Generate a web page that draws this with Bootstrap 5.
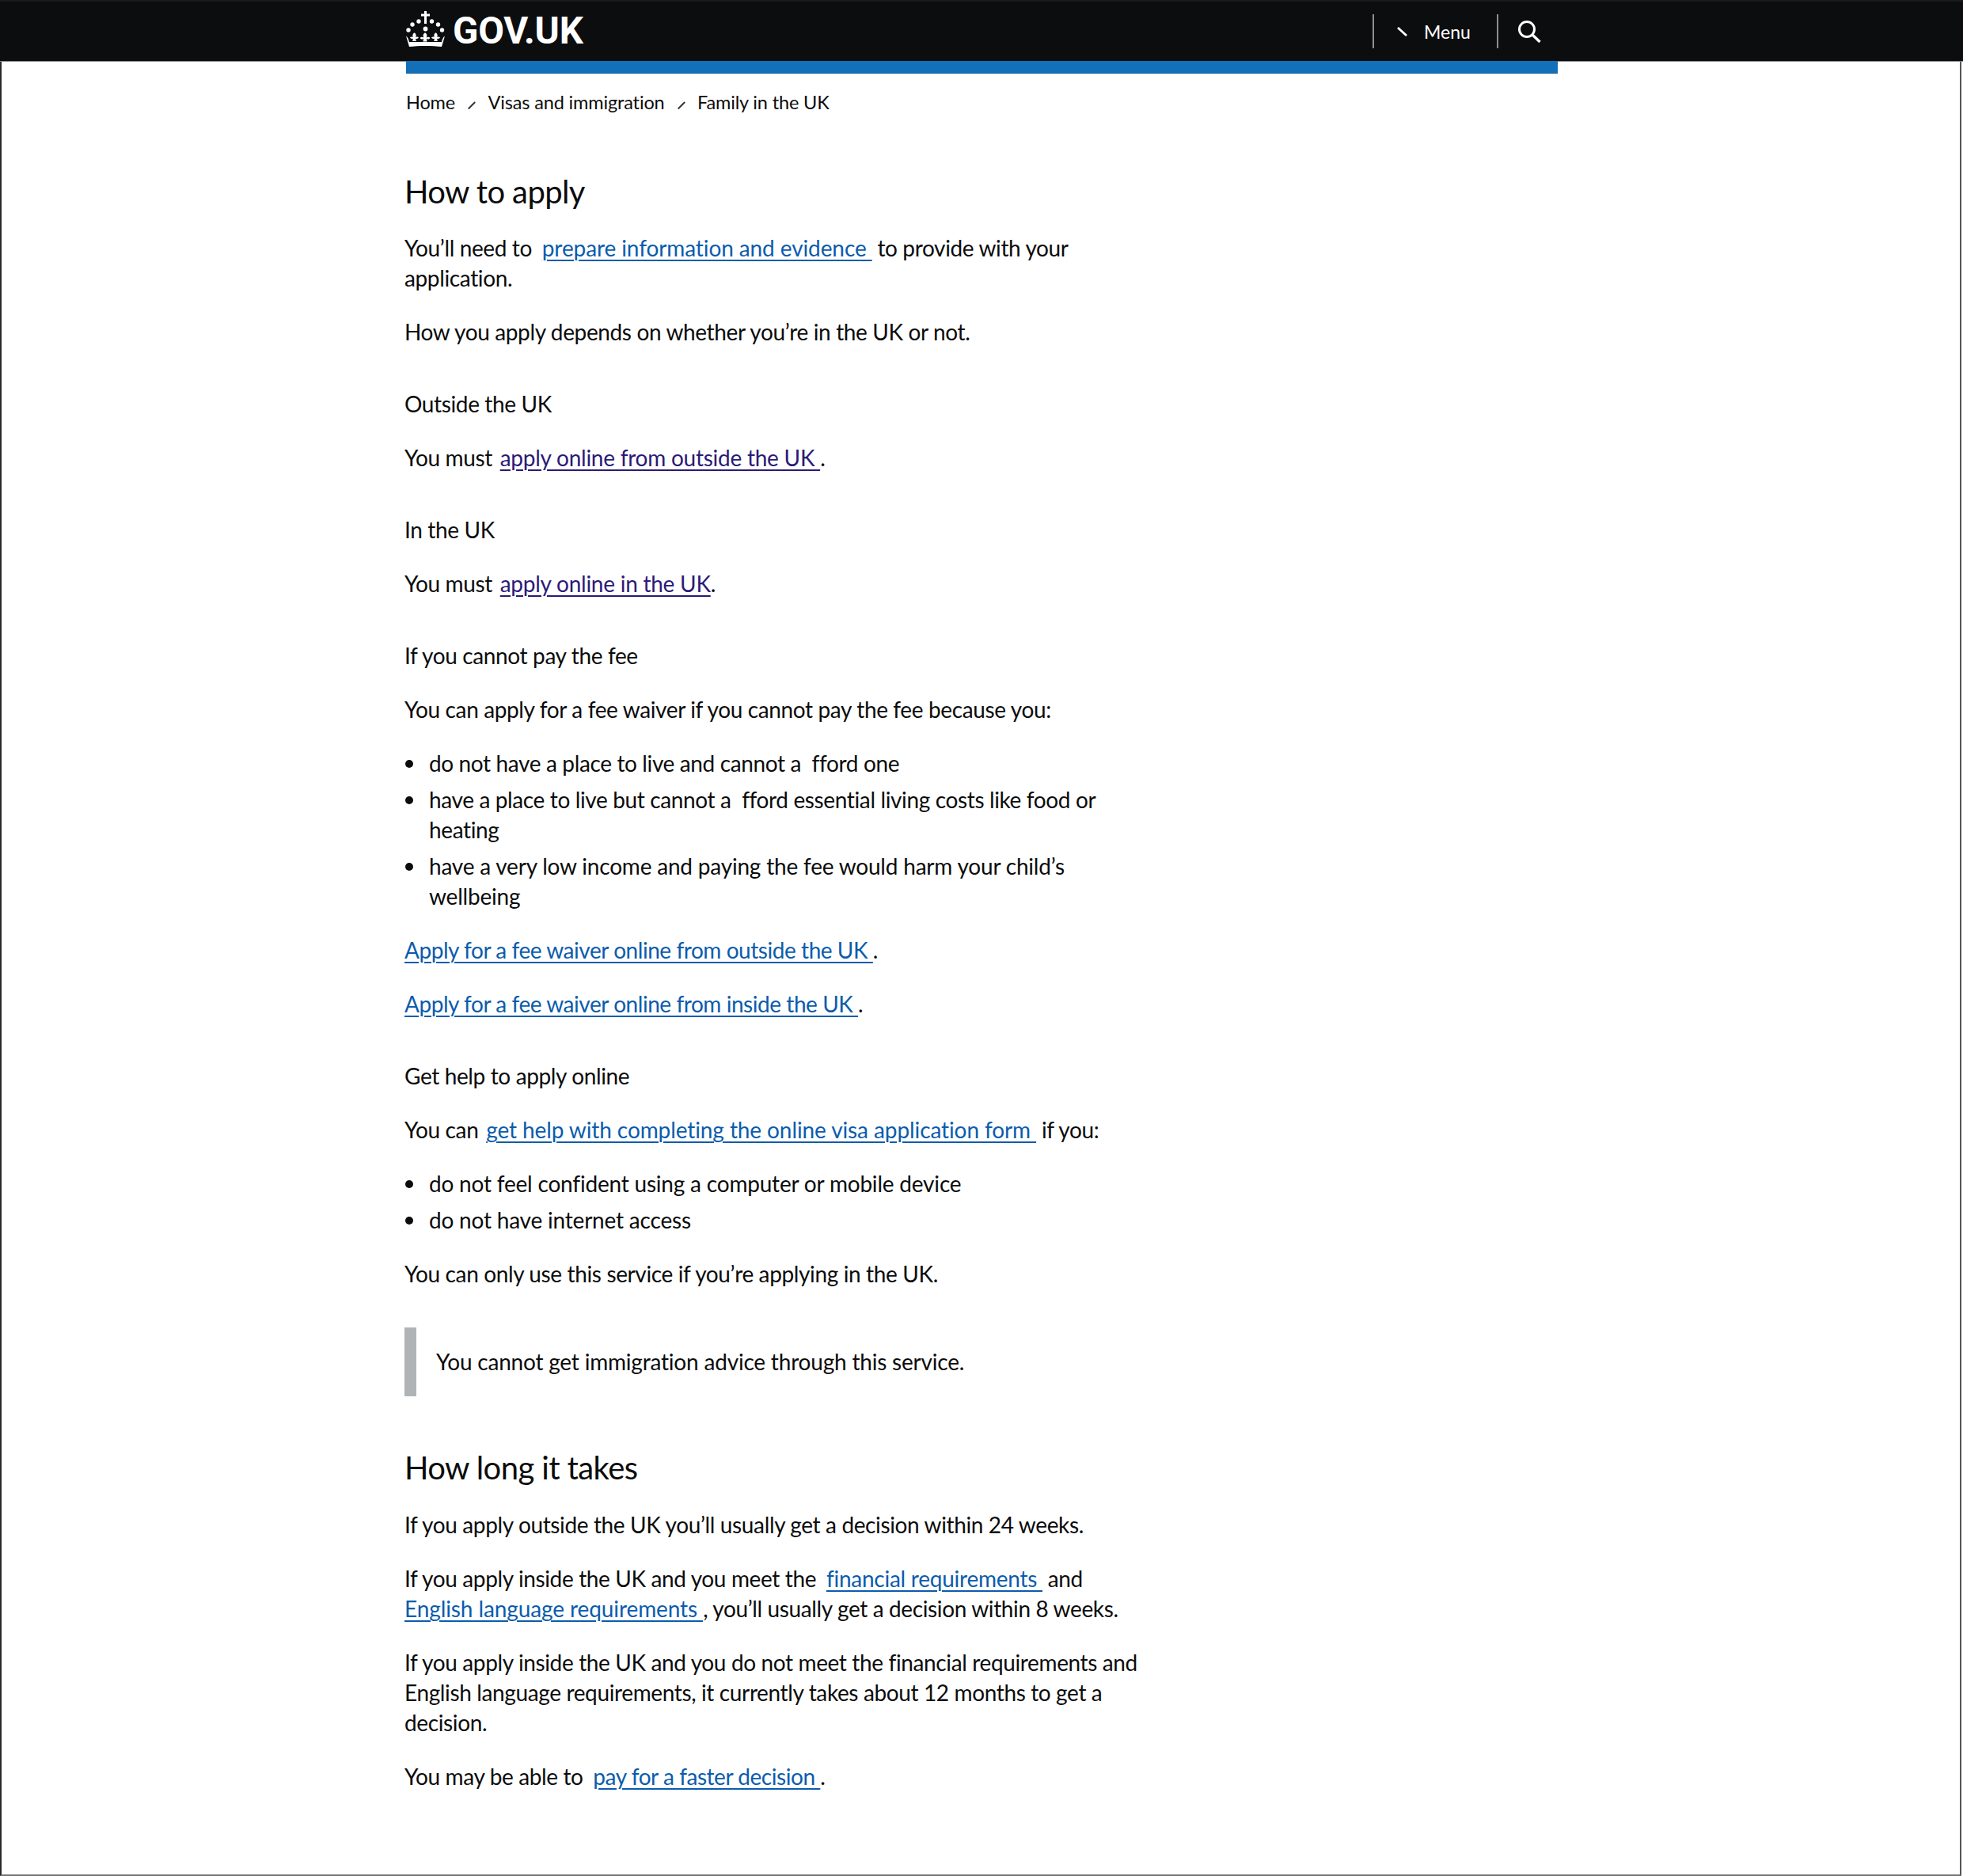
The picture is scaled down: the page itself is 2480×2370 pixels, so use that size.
<!DOCTYPE html>
<html lang="en">
<head>
<meta charset="utf-8">
<title>How to apply</title>
<link rel="stylesheet" href="https://cdn.jsdelivr.net/npm/bootstrap@5.3.0/dist/css/bootstrap.min.css">
<style>
body{font-family:"Lato","Open Sans",sans-serif;font-size:28px;line-height:38px;letter-spacing:-.37px;color:#0b0c0c;background:#fff;margin:0}
.top-strip{background:#0c0d0f;height:77px;padding:0;border-top:2px solid #1a1b1d;align-items:stretch;box-shadow:0 1px 0 #8a8a8a}
.page-frame{height:2293px;margin-right:2px;border-left:2px solid #2a2a2a;border-right:2px solid #555;border-bottom:2px solid #777}
.site-frame{width:1457px;margin-left:509px}
.header-frame{width:1457px;margin-left:511px;padding-left:2px}
.logo-link{color:#fff;font-family:"Roboto","Liberation Sans",sans-serif;font-weight:700;font-size:47.500px;line-height:1;letter-spacing:-.2px;text-decoration:none;gap:10px}
.logo-link svg{width:49px;height:45px;flex:none;margin-bottom:6px}
.logo-link:hover{color:#fff}
.menu-area{color:#fff;font-size:23px;letter-spacing:0}
.menu-btn{border-left:2px solid #8d8f91;border-right:2px solid #8d8f91;height:43px;width:159px;padding-left:29px;gap:20px;color:#fff;text-decoration:none}
.search-btn{width:75px;padding-left:24px}
.blue-strip{position:relative;height:16px;background:#1370b8;border-bottom:1px solid #0f5f9e;margin-left:2px}
.crumb-row{font-size:23.500px;letter-spacing:-.15px;margin:0 0 1px 2px;padding:0 0 2px;--bs-breadcrumb-margin-bottom:0;height:74px;align-items:center}
.crumb-row .breadcrumb-item a{color:#0b0c0c;text-decoration:none}
.crumb-row .breadcrumb-item+.breadcrumb-item{padding-left:41.500px;position:relative}
.crumb-row .breadcrumb-item+.breadcrumb-item::before{content:"";position:absolute;left:20px;top:17px;width:1.500px;height:12px;padding:0;background:#333;transform:rotate(45deg);float:none}
.content-col{width:960px;padding-top:49px}
h2.sect-title{font-size:40px;line-height:50px;font-weight:400;letter-spacing:-.6px;margin:0 0 27px}
.flow-text{margin:0 0 30px}
h3.sub-title{font-size:28px;line-height:38px;font-weight:400;margin:53px 0 30px;letter-spacing:inherit}
.gov-link{color:#0b5cad;text-decoration:underline;text-underline-offset:4px;text-decoration-thickness:2px;letter-spacing:-.25px}
.gov-link.seen{color:#2c1a78}
.gov-link.stretch-link{letter-spacing:-.1px}
.gov-link.tight-link{letter-spacing:-.45px}
.lead-gap{margin-left:3px}
.wide-gap{margin-left:6px}
.bullet-set{margin:0 0 30px;padding-left:31px;list-style:none}
.bullet-set li{margin-bottom:8px;position:relative}
.bullet-set li::before{content:"";position:absolute;left:-30px;top:15px;width:10px;height:10px;border-radius:50%;background:#0b0c0c}
.bullet-set li:last-child{margin-bottom:0}
.bullet-set li.roomy-item{letter-spacing:-.2px}
.inset-box{border-left:15px solid #b1b4b6;height:87px;padding:0 0 2px 25px;margin:49px 0 0;display:flex;align-items:center;letter-spacing:-.2px}
h2.sect-title.next-sect{margin-top:65px;margin-bottom:28px}
</style>
</head>
<body>
<nav class="navbar top-strip">
  <div class="header-frame d-flex align-items-center justify-content-between">
    <a class="logo-link d-flex align-items-center" href="#">
      <svg viewBox="0 0 49 45" fill="#fff" aria-hidden="true">
        <path d="M23 0h3v3.500h4v3h-4V16h-3V6.500h-4v-3h4z"/>
        <circle cx="16" cy="13" r="2.700"/><circle cx="32.500" cy="13" r="2.700"/>
        <circle cx="8" cy="17" r="2.700"/><circle cx="40.500" cy="17" r="2.700"/>
        <circle cx="3" cy="24" r="2.700"/><circle cx="45.500" cy="24" r="2.700"/>
        <circle cx="24.500" cy="22.500" r="2.900"/>
        <path d="M24.500 27.500c2 1.800 2.400 3.600 1.300 5.900 1.900-.9 3.700-.7 4.500.5-.8 1.500-2.600 1.800-4.500 1.200l.8 3.400h-5.200l.8-3.400c-1.900.6-3.700.3-4.500-1.200.8-1.200 2.600-1.400 4.500-.5-1.100-2.300-.7-4.100 1.300-5.900z"/>
        <path d="M11 27.500c1.800 1.700 2.200 3.500 1.100 5.600 1.600-.8 3.200-.6 3.900.5-.7 1.300-2.300 1.600-3.900 1.100l.7 3.300H8.200l.7-3.300c-1.600.5-3.200.2-3.900-1.100.7-1.100 2.300-1.300 3.900-.5-1.100-2.100-.7-3.900 1.100-5.600z"/>
        <path d="M38 27.500c1.800 1.700 2.200 3.500 1.100 5.600 1.600-.8 3.200-.6 3.900.5-.7 1.300-2.300 1.600-3.900 1.100l.7 3.300h-4.600l.7-3.300c-1.600.5-3.200.2-3.900-1.100.7-1.100 2.300-1.300 3.900-.5-1.100-2.100-.7-3.900 1.100-5.600z"/>
        <path d="M0 31.500c2 1.500 3.300 4 3.900 7.500h41.200c.6-3.500 1.900-6 3.900-7.500L45 45c-11-1.500-30-1.500-41 0z"/>
      </svg>
      <span>GOV.UK</span>
    </a>
    <div class="menu-area d-flex align-items-center">
      <a class="menu-btn d-flex align-items-center" href="#">
        <svg width="14" height="14" viewBox="0 0 14 14" aria-hidden="true"><path d="M1 2l11 10" stroke="#fff" stroke-width="2.800" fill="none"/></svg>
        <span>Menu</span>
      </a>
      <a class="search-btn d-flex align-items-center" href="#" aria-label="Search">
        <svg width="30" height="30" viewBox="0 0 30 30" aria-hidden="true"><circle cx="12" cy="12" r="9.500" stroke="#fff" stroke-width="3" fill="none"/><path d="M18.500 18.500L28.500 28" stroke="#fff" stroke-width="3.400" fill="none"/></svg>
      </a>
    </div>
  </div>
</nav>
<div class="page-frame">
<div class="site-frame">
  <div class="blue-strip"></div>
  <ol class="breadcrumb crumb-row">
    <li class="breadcrumb-item"><a href="#">Home</a></li>
    <li class="breadcrumb-item"><a href="#">Visas and immigration</a></li>
    <li class="breadcrumb-item"><a href="#">Family in the UK</a></li>
  </ol>
  <main class="content-col">
    <h2 class="sect-title">How to apply</h2>
    <p class="flow-text">You’ll need to <a class="gov-link stretch-link wide-gap" href="#">prepare information and evidence&nbsp;</a> to provide with your<br>application.</p>
    <p class="flow-text">How you apply depends on whether you’re in the UK or not.</p>
    <h3 class="sub-title">Outside the UK</h3>
    <p class="flow-text">You must <a class="gov-link seen lead-gap" href="#">apply online from outside the UK </a>.</p>
    <h3 class="sub-title">In the UK</h3>
    <p class="flow-text">You must <a class="gov-link seen lead-gap" href="#">apply online in the UK</a>.</p>
    <h3 class="sub-title">If you cannot pay the fee</h3>
    <p class="flow-text">You can apply for a fee waiver if you cannot pay the fee because you:</p>
    <ul class="bullet-set">
      <li>do not have a place to live and cannot a &nbsp;fford one</li>
      <li>have a place to live but cannot a &nbsp;fford essential living costs like food or<br>heating</li>
      <li class="roomy-item">have a very low income and paying the fee would harm your child’s<br>wellbeing</li>
    </ul>
    <p class="flow-text"><a class="gov-link tight-link" href="#">Apply for a fee waiver online from outside the UK </a>.</p>
    <p class="flow-text"><a class="gov-link tight-link" href="#">Apply for a fee waiver online from inside the UK </a>.</p>
    <h3 class="sub-title">Get help to apply online</h3>
    <p class="flow-text">You can <a class="gov-link stretch-link lead-gap" href="#">get help with completing the online visa application form&nbsp;</a> if you:</p>
    <ul class="bullet-set">
      <li class="roomy-item">do not feel confident using a computer or mobile device</li>
      <li class="roomy-item">do not have internet access</li>
    </ul>
    <p class="flow-text">You can only use this service if you’re applying in the UK.</p>
    <div class="inset-box">You cannot get immigration advice through this service.</div>
    <h2 class="sect-title next-sect">How long it takes</h2>
    <p class="flow-text">If you apply outside the UK you’ll usually get a decision within 24 weeks.</p>
    <p class="flow-text">If you apply inside the UK and you meet the <a class="gov-link wide-gap" href="#">financial requirements&nbsp;</a> and<br><a class="gov-link stretch-link" href="#">English language requirements </a>, you’ll usually get a decision within 8 weeks.</p>
    <p class="flow-text">If you apply inside the UK and you do not meet the financial requirements and<br>English language requirements, it currently takes about 12 months to get a<br>decision.</p>
    <p class="flow-text">You may be able to <a class="gov-link wide-gap tight-link" href="#">pay for a faster decision </a>.</p>
  </main>
</div>
</div>
<script src="https://cdn.jsdelivr.net/npm/bootstrap@5.3.0/dist/js/bootstrap.bundle.min.js"></script>
</body>
</html>
